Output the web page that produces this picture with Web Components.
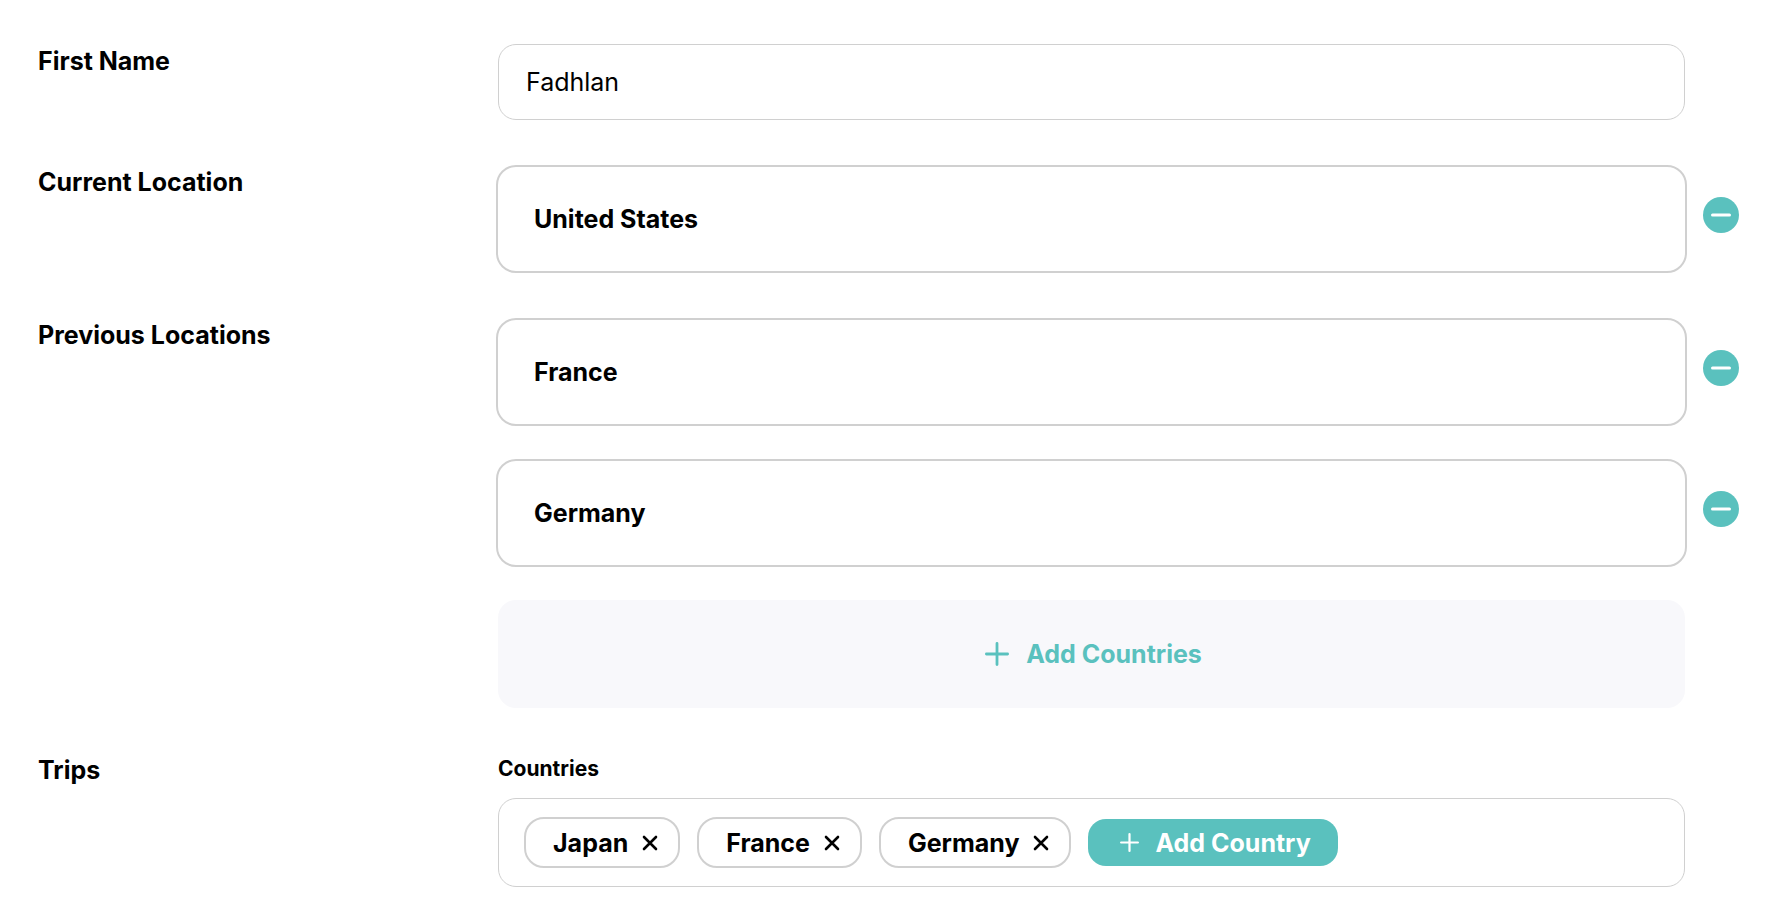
<!DOCTYPE html>
<html lang="en">
<head>
<meta charset="utf-8">
<title>Profile</title>
<style>
  body { margin: 0; background: #fff; color: #000; font-family: Inter, "Open Sans", sans-serif; font-size: 25px; }
</style>
</head>
<body>
<profile-form></profile-form>

<template id="form-row-template">
  <style>
    :host { display: grid; grid-template-columns: 460px minmax(0, 1fr); align-items: start; }
    .label { line-height: 34px; font-weight: 700; }
    .content { display: grid; }
  </style>
  <div class="label"><slot name="label"></slot></div>
  <div class="content"><slot></slot></div>
</template>

<template id="location-card-template">
  <style>
    :host { display: grid; grid-template-columns: minmax(0, 1fr) 36px; column-gap: 16px; align-items: start; margin: 0 -54px 0 -2px; }
    .card { box-sizing: border-box; min-height: 108px; padding: 0 36px; border: 2px solid #d0d0d0; border-radius: 20px; display: flex; align-items: center; font-weight: 700; line-height: 32px; }
    button { width: 36px; height: 36px; margin: 32px 0 0; padding: 0; border: 0; border-radius: 50%; background: #5ac1be; cursor: pointer; }
    svg { display: block; }
  </style>
  <div class="card"><slot></slot></div>
  <button type="button" aria-label="Remove location">
    <svg width="36" height="36" viewBox="0 0 36 36" fill="none" stroke="#fff" stroke-width="3" stroke-linecap="round"><path d="M9.5 18H26.5"/></svg>
  </button>
</template>

<template id="country-chip-template">
  <style>
    :host { display: flex; align-items: center; box-sizing: border-box; height: 51px; padding: 0 20px 0 27px; gap: 14px; border: 2px solid #d0d0d0; border-radius: 20px; font-weight: 700; line-height: 32px; }
    button { padding: 0; border: 0; background: none; color: inherit; cursor: pointer; }
    svg { display: block; }
  </style>
  <span><slot></slot></span>
  <button type="button" aria-label="Remove country">
    <svg width="16" height="16" viewBox="0 0 16 16" fill="none" stroke="currentColor" stroke-width="2.6" stroke-linecap="round"><path d="M2 2L14 14M14 2L2 14"/></svg>
  </button>
</template>

<template id="add-button-template">
  <style>
    :host { display: grid; }
    button { display: flex; align-items: center; justify-content: center; border: 0; font: inherit; font-weight: 700; line-height: 32px; cursor: pointer; margin: 0; }
    svg { display: block; flex: none; }
    .block { min-height: 108px; padding: 0 20px 0 24px; gap: 17px; border-radius: 18px; background: #f8f8fb; color: #5ac1be; }
    .pill { height: 47px; padding: 0 27px 0 32px; gap: 16px; border-radius: 18px; background: #5ac1be; color: #fff; }
    .block svg { width: 24px; height: 24px; }
    .pill svg { width: 19px; height: 19px; }
  </style>
  <button type="button">
    <svg viewBox="0 0 24 24" fill="none" stroke="currentColor" stroke-width="2.8" stroke-linecap="round"><path d="M12 1.4V22.6M1.4 12H22.6"/></svg>
    <span><slot></slot></span>
  </button>
</template>

<template id="profile-form-template">
  <style>
    :host { display: block; padding: 44px 97px 29px 38px; }
    form { display: grid; row-gap: 45px; }
    input { box-sizing: border-box; width: 100%; height: 76px; margin: 0; padding: 0 27px; border: 1px solid #d0d0d0; border-radius: 18px; background: #fff; color: #000; font: inherit; outline: none; }
    .stack { display: grid; row-gap: 33px; }
    h2 { margin: 0 0 13px; font-size: 21px; line-height: 32px; font-weight: 700; }
    .chips { box-sizing: border-box; min-height: 89px; padding: 18px 25px; border: 1px solid #d0d0d0; border-radius: 18px; display: flex; flex-wrap: wrap; align-items: center; gap: 17px; }
  </style>
  <form>
    <form-row>
      <label slot="label" for="first-name">First Name</label>
      <input id="first-name" type="text" value="Fadhlan">
    </form-row>
    <form-row>
      <span slot="label">Current Location</span>
      <location-card>United States</location-card>
    </form-row>
    <form-row>
      <span slot="label">Previous Locations</span>
      <div class="stack">
        <location-card>France</location-card>
        <location-card>Germany</location-card>
        <add-button variant="block">Add Countries</add-button>
      </div>
    </form-row>
    <form-row>
      <span slot="label">Trips</span>
      <h2>Countries</h2>
      <div class="chips">
        <country-chip>Japan</country-chip>
        <country-chip>France</country-chip>
        <country-chip>Germany</country-chip>
        <add-button variant="pill">Add Country</add-button>
      </div>
    </form-row>
  </form>
</template>

<script>
  class TemplateElement extends HTMLElement {
    constructor() {
      super();
      const template = document.getElementById(this.localName + "-template");
      this.attachShadow({ mode: "open" }).append(template.content.cloneNode(true));
    }
  }
  class FormRow extends TemplateElement {}
  class LocationCard extends TemplateElement {}
  class CountryChip extends TemplateElement {}
  class AddButton extends TemplateElement {
    connectedCallback() {
      this.shadowRoot.querySelector("button").className = this.getAttribute("variant") || "block";
    }
  }
  class ProfileForm extends TemplateElement {}
  customElements.define("form-row", FormRow);
  customElements.define("location-card", LocationCard);
  customElements.define("country-chip", CountryChip);
  customElements.define("add-button", AddButton);
  customElements.define("profile-form", ProfileForm);
</script>
</body>
</html>
